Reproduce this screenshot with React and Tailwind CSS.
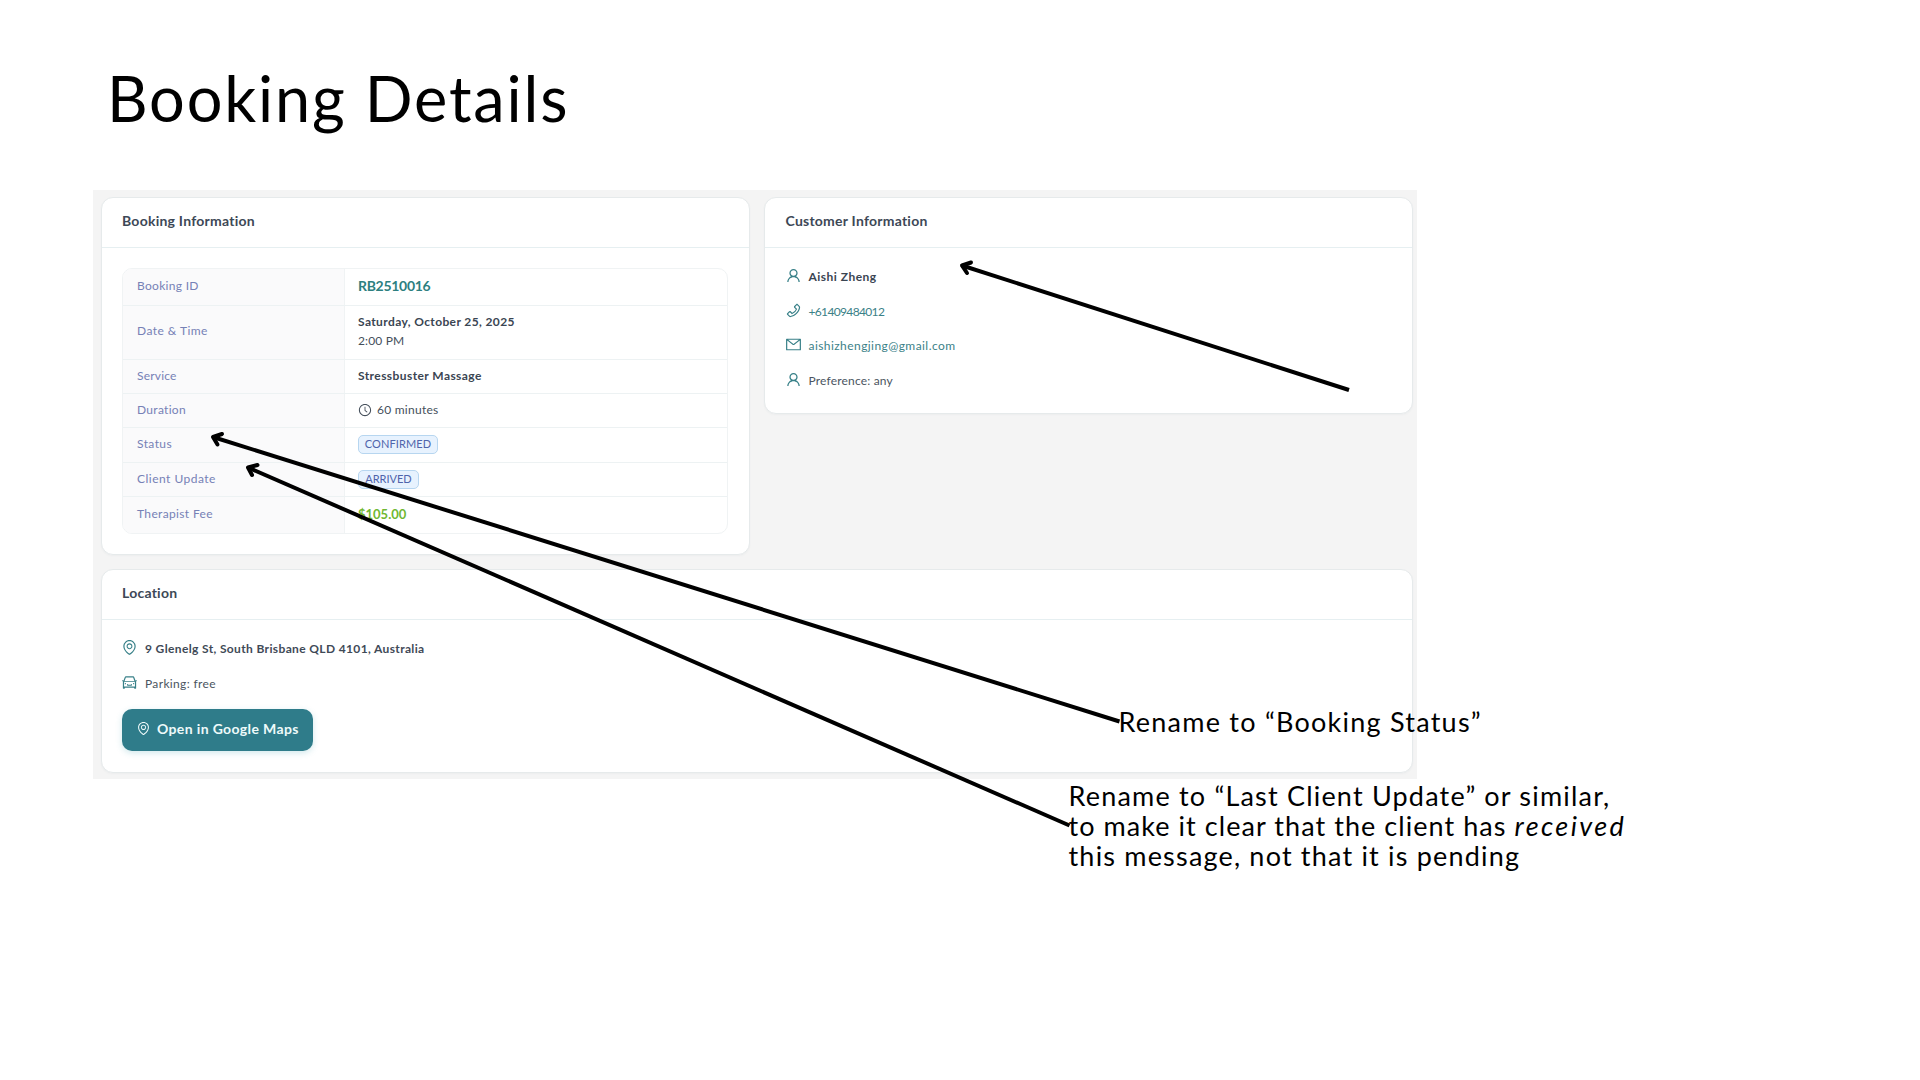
import {
  AiOutlineCar,
  AiOutlineClockCircle,
  AiOutlineEnvironment,
  AiOutlineMail,
  AiOutlinePhone,
  AiOutlineUser,
} from "react-icons/ai";

const card = "rounded-xl border border-[#e6eaeb] bg-white shadow-[0_1px_2px_rgba(40,80,90,0.04)]";

function Card({ title, className = "", children }) {
  return (
    <section className={`${card} ${className}`}>
      <h2 className="flex h-[49.5px] items-center border-b border-[#e6eff1] px-[20.5px] pb-[3px] text-[14px] font-bold tracking-[0.24px] text-[#3d4856]">
        {title}
      </h2>
      {children}
    </section>
  );
}

function Row({ label, height, tracking, pad = "pb-[2px]", last, children }) {
  return (
    <div className={`flex ${height} ${last ? "" : "border-b border-[#edf2f3]"}`}>
      <div
        className={`flex w-[222px] shrink-0 items-center border-r border-[#f0f3f4] bg-[#fafafb] pl-[14px] ${pad} ${tracking} text-[#7681b6]`}
      >
        {label}
      </div>
      <div className={`flex flex-1 items-center pl-[13px] ${pad} text-[#454f5b]`}>{children}</div>
    </div>
  );
}

function Badge({ children, className }) {
  return (
    <span
      className={`mt-[1px] flex h-[19px] items-center justify-center rounded-[5px] border border-[#b7d6f0] bg-[#e7f2fe] pb-[1px] text-[11px] text-[#4f64ab] ${className}`}
    >
      {children}
    </span>
  );
}

function Item({ icon: Icon, children, className }) {
  return (
    <div className="flex h-[34.5px] items-center">
      <Icon className="-ml-[0.5px] mb-[3px] size-[17px] shrink-0 text-[#388088]" />
      <span className={`ml-[7px] ${className}`}>{children}</span>
    </div>
  );
}

function Arrow({ line, head }) {
  return (
    <g>
      <path d={line} strokeWidth="4" />
      <path d={head} strokeWidth="4" strokeLinecap="round" strokeLinejoin="round" />
    </g>
  );
}

export default function App() {
  return (
    <main className="relative h-[1080px] w-[1920px] overflow-hidden whitespace-nowrap bg-white pl-[93px] pt-[62px] font-['Lato',sans-serif] text-[12px] leading-4">
      <h1 className="ml-[14px] h-[128px] text-[63px] leading-[72px] tracking-[1.85px] text-black">Booking Details</h1>

      <div className="grid h-[589px] w-[1324px] grid-cols-[649px_649px] grid-rows-[358px_204px] content-start gap-x-[14.5px] gap-y-[14px] bg-[#f4f4f4] pl-[7.5px] pt-[7px]">
        <Card title="Booking Information">
          <div className="ml-[20.5px] mt-[20.5px] w-[606px] overflow-hidden rounded-[10px] border border-[#f0f3f4]">
            <Row label="Booking ID" height="h-[37px]" tracking="tracking-[0.3px]" pad="pb-[3px]">
              <span className="text-[14px] font-bold tracking-[-0.3px] text-[#2d7f80]">RB2510016</span>
            </Row>
            <Row label="Date & Time" height="h-[54px]" tracking="tracking-[0.45px]" pad="pb-[4px]">
              <div className="leading-[19px]">
                <div className="font-bold tracking-[0.38px] text-[#3a4552]">Saturday, October 25, 2025</div>
                <div className="tracking-[0.15px]">2:00 PM</div>
              </div>
            </Row>
            <Row label="Service" height="h-[34px]" tracking="tracking-[0.2px]">
              <span className="font-bold tracking-[0.42px] text-[#3a4552]">Stressbuster Massage</span>
            </Row>
            <Row label="Duration" height="h-[34px]" tracking="tracking-[0.3px]">
              <AiOutlineClockCircle className="size-[14px]" />
              <span className="ml-[5px] tracking-[0.25px]">60 minutes</span>
            </Row>
            <Row label="Status" height="h-[35px]" tracking="tracking-[0.4px]">
              <Badge className="w-[80px] tracking-[0.1px]">CONFIRMED</Badge>
            </Row>
            <Row label="Client Update" height="h-[34px]" tracking="tracking-[0.48px]">
              <Badge className="w-[61px]">ARRIVED</Badge>
            </Row>
            <Row label="Therapist Fee" height="h-[36px]" tracking="tracking-[0.35px]" pad="pb-[3px]" last>
              <span className="text-[13px] font-bold text-[#70b832]">$105.00</span>
            </Row>
          </div>
        </Card>

        <Card title="Customer Information" className="h-[217px]">
          <div className="ml-5 mt-[12.5px]">
            <Item icon={AiOutlineUser} className="font-bold tracking-[0.48px] text-[#3a4552]">
              Aishi Zheng
            </Item>
            <Item icon={AiOutlinePhone} className="tracking-[-0.65px] text-[#3b8188]">
              +61409484012
            </Item>
            <Item icon={AiOutlineMail} className="tracking-[0.43px] text-[#3b8188]">
              aishizhengjing@gmail.com
            </Item>
            <Item icon={AiOutlineUser} className="tracking-[0.18px] text-[#4b5561]">
              Preference: any
            </Item>
          </div>
        </Card>

        <Card title="Location" className="col-span-2 w-[1312.5px]">
          <div className="ml-[20px] mt-[12.5px]">
            <Item icon={AiOutlineEnvironment} className="font-bold tracking-[0.36px] text-[#3f4a57]">
              9 Glenelg St, South Brisbane QLD 4101, Australia
            </Item>
            <Item icon={AiOutlineCar} className="tracking-[0.35px] text-[#4b5561]">
              Parking: free
            </Item>
            <button className="mt-[7.5px] flex h-[42px] w-[191px] items-center rounded-[10px] bg-[#2f7c8a] pb-[2px] pl-[14px] text-[14px] font-bold tracking-[0.36px] text-[#eefafa] shadow-[0_2px_6px_rgba(47,150,170,0.22)]">
              <AiOutlineEnvironment className="size-[15px]" />
              <span className="ml-[6.5px]">Open in Google Maps</span>
            </button>
          </div>
        </Card>
      </div>

      <svg className="absolute left-0 top-0" width="1920" height="1080" fill="none" stroke="#000">
        <Arrow line="M213 437L1119.500 721.500" head="M222 434L213 437L217.500 444.500" />
        <Arrow line="M248 467.500L1069.500 825.500" head="M257.500 465L248 467.500L252 475" />
        <Arrow line="M962 265.500L1349 390" head="M971 262.500L962 265.500L967 273" />
      </svg>

      <p className="absolute left-[1118.500px] top-[707px] text-[27px] leading-[30px] tracking-[1.24px] text-black">
        Rename to “Booking Status”
      </p>
      <p className="absolute left-[1068.500px] top-[781px] text-[27px] leading-[30px] text-black">
        <span className="tracking-[1.19px]">Rename to “Last Client Update” or similar,</span>
        <br />
        <span className="tracking-[1.06px]">to make it clear that the client has </span>
        <em className="tracking-[2.4px]">received</em>
        <br />
        <span className="tracking-[1.19px]">this message, not that it is pending</span>
      </p>
    </main>
  );
}
